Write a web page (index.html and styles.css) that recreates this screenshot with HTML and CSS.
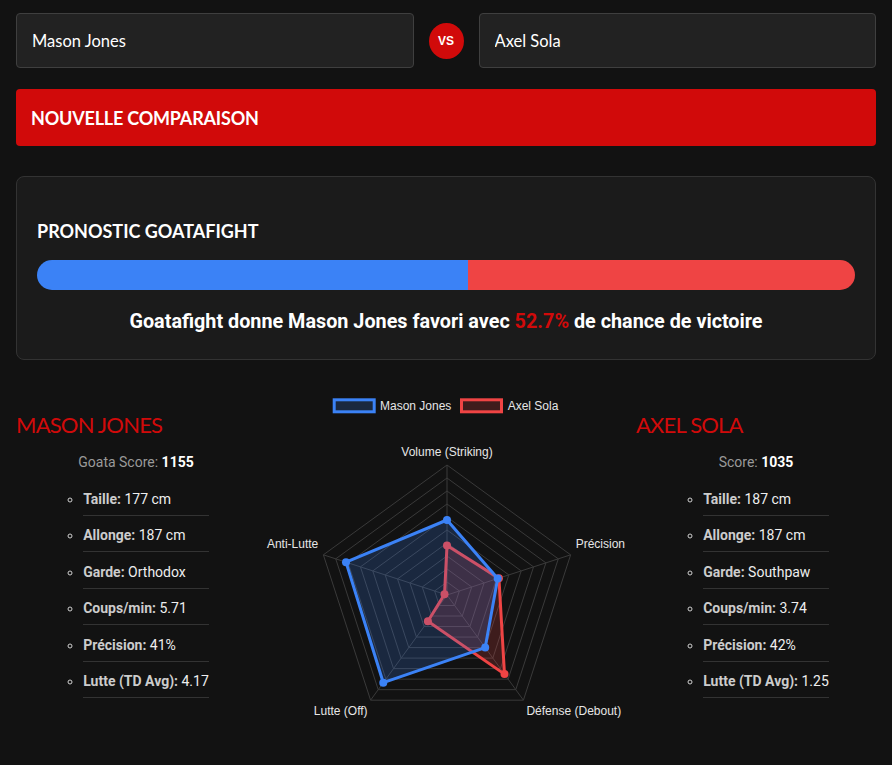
FILE: index.html
```html
<!DOCTYPE html>
<html lang="fr">
<head>
<meta charset="utf-8">
<title>Goatafight - Comparaison</title>
<link rel="stylesheet" href="styles.css">
</head>
<body>
<div class="page">
  <div class="picker">
    <input class="fighter-input" type="text" value="Mason Jones">
    <div class="vs">VS</div>
    <input class="fighter-input" type="text" value="Axel Sola">
  </div>
  <button class="new-btn">NOUVELLE COMPARAISON</button>

  <section class="card">
    <h3 class="card-title">PRONOSTIC GOATAFIGHT</h3>
    <div class="bar">
      <div class="bar-blue" style="width:52.7%"></div>
      <div class="bar-red"></div>
    </div>
    <p class="verdict">Goatafight donne Mason Jones favori avec <span class="pct">52.7%</span> de chance de victoire</p>
  </section>

  <section class="fighters">
    <div class="fighter">
      <h2 class="fighter-name">MASON JONES</h2>
      <p class="score"><span class="score-label">Goata Score:</span> <b>1155</b></p>
      <ul class="stats">
        <li><b>Taille:</b> 177 cm</li>
        <li><b>Allonge:</b> 187 cm</li>
        <li><b>Garde:</b> Orthodox</li>
        <li><b>Coups/min:</b> 5.71</li>
        <li><b>Précision:</b> 41%</li>
        <li><b>Lutte (TD Avg):</b> 4.17</li>
      </ul>
    </div>

    <div class="chart">
      <svg class="radar" width="380" height="340" viewBox="0 0 380 340">
        <g class="legend">
          <rect x="78.2" y="11.8" width="40" height="12" fill="rgba(59,130,246,0.2)" stroke="#3b82f6" stroke-width="3"/>
          <text x="124" y="21.6">Mason Jones</text>
          <rect x="205.5" y="11.8" width="40" height="12" fill="rgba(239,68,68,0.2)" stroke="#ef4444" stroke-width="3"/>
          <text x="251.7" y="21.6">Axel Sola</text>
        </g>
        <g transform="translate(191 207)">
          <g class="grid">
            <polygon points="0,-13 12.36,-4.02 7.64,10.52 -7.64,10.52 -12.36,-4.02"/>
            <polygon points="0,-26 24.73,-8.03 15.28,21.03 -15.28,21.03 -24.73,-8.03"/>
            <polygon points="0,-39 37.09,-12.05 22.92,31.55 -22.92,31.55 -37.09,-12.05"/>
            <polygon points="0,-52 49.46,-16.07 30.57,42.07 -30.57,42.07 -49.46,-16.07"/>
            <polygon points="0,-65 61.82,-20.09 38.21,52.59 -38.21,52.59 -61.82,-20.09"/>
            <polygon points="0,-78 74.19,-24.10 45.85,63.10 -45.85,63.10 -74.19,-24.10"/>
            <polygon points="0,-91 86.55,-28.12 53.49,73.62 -53.49,73.62 -86.55,-28.12"/>
            <polygon points="0,-104 98.91,-32.14 61.13,84.14 -61.13,84.14 -98.91,-32.14"/>
            <polygon points="0,-117 111.28,-36.15 68.77,94.65 -68.77,94.65 -111.28,-36.15"/>
            <polygon points="0,-130 123.64,-40.17 76.41,105.17 -76.41,105.17 -123.64,-40.17"/>
            <line x1="0" y1="0" x2="0" y2="-130"/>
            <line x1="0" y1="0" x2="123.64" y2="-40.17"/>
            <line x1="0" y1="0" x2="76.41" y2="105.17"/>
            <line x1="0" y1="0" x2="-76.41" y2="105.17"/>
            <line x1="0" y1="0" x2="-123.64" y2="-40.17"/>
          </g>
          <g class="set-red">
            <polygon points="0,-49.4 51.93,-16.87 57.49,79.12 -19.10,26.29 -2.47,-0.80"/>
            <circle cx="0" cy="-49.4" r="4"/>
            <circle cx="51.93" cy="-16.87" r="4"/>
            <circle cx="57.49" cy="79.12" r="4"/>
            <circle cx="-19.10" cy="26.29" r="4"/>
            <circle cx="-2.47" cy="-0.80" r="4"/>
          </g>
          <g class="set-blue">
            <polygon points="0,-75 50.69,-16.47 38.21,52.59 -63.72,87.70 -101.01,-32.82"/>
            <circle cx="0" cy="-75" r="4"/>
            <circle cx="50.69" cy="-16.47" r="4"/>
            <circle cx="38.21" cy="52.59" r="4"/>
            <circle cx="-63.72" cy="87.70" r="4"/>
            <circle cx="-101.01" cy="-32.82" r="4"/>
          </g>
        </g>
        <g class="axis-labels">
          <text x="191" y="67.8" text-anchor="middle">Volume (Striking)</text>
          <text x="319.7" y="160.4">Précision</text>
          <text x="317.8" y="327" text-anchor="middle">Défense (Debout)</text>
          <text x="84.7" y="327" text-anchor="middle">Lutte (Off)</text>
          <text x="62.3" y="160.4" text-anchor="end">Anti-Lutte</text>
        </g>
      </svg>
    </div>

    <div class="fighter">
      <h2 class="fighter-name">AXEL SOLA</h2>
      <p class="score"><span class="score-label">Score:</span> <b>1035</b></p>
      <ul class="stats">
        <li><b>Taille:</b> 187 cm</li>
        <li><b>Allonge:</b> 187 cm</li>
        <li><b>Garde:</b> Southpaw</li>
        <li><b>Coups/min:</b> 3.74</li>
        <li><b>Précision:</b> 42%</li>
        <li><b>Lutte (TD Avg):</b> 1.25</li>
      </ul>
    </div>
  </section>
</div>
</body>
</html>
```
FILE: styles.css
```css
* { box-sizing: border-box; }

html, body {
  margin: 0;
  background: #121212;
  color: #eeeeee;
  font-family: Roboto, "Liberation Sans", Arial, sans-serif;
}

.page {
  padding: 13px 16px 20px;
}

.picker {
  display: flex;
  align-items: center;
  gap: 15px;
}

.fighter-input {
  flex: 1;
  min-width: 0;
  height: 55px;
  padding: 0 15px;
  background: #222222;
  border: 1px solid #3f3f3f;
  border-radius: 4px;
  color: #ffffff;
  font-family: Lato, "Noto Sans", sans-serif;
  font-size: 16.5px;
  outline: none;
}

.vs {
  flex: 0 0 35px;
  height: 36px;
  border-radius: 50%;
  background: #d10a0a;
  color: #ffffff;
  display: flex;
  align-items: center;
  justify-content: center;
  font-family: "Liberation Sans", Arial, sans-serif;
  font-weight: 700;
  font-size: 12px;
}

.new-btn {
  display: block;
  width: 100%;
  height: 57px;
  margin-top: 21px;
  padding: 0 15px;
  border: none;
  border-radius: 4px;
  background: #d10a0a;
  color: #ffffff;
  text-align: left;
  font-family: Lato, "Noto Sans", sans-serif;
  font-weight: 700;
  font-size: 18px;
  letter-spacing: -0.2px;
}

.card {
  margin-top: 30px;
  padding: 42px 20px 26px;
  background: #1b1b1b;
  border: 1px solid #333333;
  border-radius: 8px;
}

.card-title {
  margin: 0;
  font-family: Lato, "Noto Sans", sans-serif;
  font-weight: 700;
  font-size: 18px;
  line-height: 24px;
  color: #ffffff;
}

.bar {
  display: flex;
  height: 30px;
  margin-top: 17px;
  border-radius: 15px;
  overflow: hidden;
}

.bar-blue { background: #3b82f6; }
.bar-red { flex: 1; background: #ef4444; }

.verdict {
  margin: 20px 0 0;
  text-align: center;
  font-weight: 700;
  font-size: 19.8px;
  color: #ffffff;
}

.pct { color: #d10a0a; }

.fighters {
  display: flex;
  align-items: flex-start;
  margin-top: 28px;
}

.fighter {
  flex: 0 0 240px;
  display: flex;
  flex-direction: column;
}

.fighter-name {
  margin: 24px 0 0;
  font-family: Lato, "Noto Sans", sans-serif;
  font-weight: 400;
  font-size: 22px;
  line-height: 26px;
  letter-spacing: -0.8px;
  color: #d10a0a;
}

.score {
  margin: 16px 0 0;
  text-align: center;
  font-size: 14px;
  color: #ffffff;
}

.score-label { color: #9a9a9a; }

.stats {
  align-self: center;
  margin: 9.3px 0 0;
  padding: 0 0 0 20px;
  list-style: circle;
  color: #eeeeee;
  font-size: 14px;
}

.stats li {
  padding: 10.7px 0 5.3px;
  line-height: 19.5px;
  border-bottom: 1px solid #333333;
}

.stats li::marker { color: #cfcfcf; }

.stats b { color: #cccccc; }

.chart {
  flex: 0 0 380px;
}

.radar {
  display: block;
}

.legend text,
.axis-labels text {
  font-family: "Liberation Sans", Arial, sans-serif;
  font-size: 12px;
  fill: #e6e6e6;
}

.grid polygon,
.grid line {
  fill: none;
  stroke: #3a3a3a;
  stroke-width: 1;
}

.set-blue polygon {
  fill: rgba(59, 130, 246, 0.2);
  stroke: #3b82f6;
  stroke-width: 3;
  stroke-linejoin: round;
}
.set-blue circle { fill: #3b82f6; }

.set-red polygon {
  fill: rgba(239, 68, 68, 0.2);
  stroke: #ef4444;
  stroke-width: 3;
  stroke-linejoin: round;
}
.set-red circle { fill: #ef4444; }
```
